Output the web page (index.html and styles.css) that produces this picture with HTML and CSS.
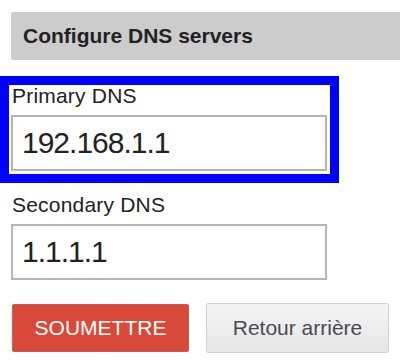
FILE: index.html
```html
<!DOCTYPE html>
<html lang="fr">
<head>
  <meta charset="UTF-8">
  <title>Configure DNS servers</title>
  <link rel="stylesheet" href="styles.css">
</head>
<body>
  <div class="page">
    <div class="section-title">Configure DNS servers</div>

    <div class="field highlight">
      <label for="dns1">Primary DNS</label>
      <input id="dns1" type="text" value="192.168.1.1">
    </div>

    <div class="field">
      <label for="dns2">Secondary DNS</label>
      <input id="dns2" type="text" value="1.1.1.1">
    </div>

    <div class="actions">
      <button class="btn btn-submit">SOUMETTRE</button>
      <button class="btn btn-back">Retour arrière</button>
    </div>
  </div>
</body>
</html>
```

FILE: styles.css
```css
body {
  margin: 0;
  font-family: "Liberation Sans", Arial, sans-serif;
  background: #fff;
  color: #222;
  overflow: hidden;
}
.page {
  padding: 12px 0 0 9px;
}
.section-title {
  margin-left: 2px;
  margin-right: -20px;
  height: 48px;
  line-height: 48px;
  padding-left: 12px;
  background: #cccccc;
  border-radius: 2px;
  font-size: 21px;
  font-weight: bold;
  color: #222;
}
.field {
  width: 321px;
  padding: 0 0 0 2px;
  box-sizing: border-box;
  margin-top: 20px;
}
.field label {
  display: block;
  margin-left: 1px;
  font-size: 21px;
  line-height: 22px;
  letter-spacing: 0.2px;
  color: #222;
}
.field input {
  display: block;
  width: 316px;
  height: 56px;
  box-sizing: border-box;
  margin-top: 8px;
  padding: 0 9px;
  border: 2px solid #b5b5b5;
  font-family: "Liberation Sans", Arial, sans-serif;
  font-size: 30px;
  letter-spacing: -1px;
  color: #222;
  outline: none;
}
.highlight {
  margin-top: 25px;
  padding-bottom: 3px;
  outline: 9px solid #0000ff;
}
.actions {
  display: flex;
  align-items: center;
  gap: 17px;
  margin-top: 23px;
  margin-left: 3px;
}
.btn {
  font-family: "Liberation Sans", Arial, sans-serif;
  font-size: 21px;
  border-radius: 2px;
  cursor: pointer;
}
.btn-submit {
  width: 177px;
  height: 48px;
  background: #d9493a;
  border: 1px solid #cc5a4f;
  color: #fff;
}
.btn-back {
  width: 183px;
  height: 50px;
  background: linear-gradient(#f4f4f4, #e6e6e6);
  border: 1px solid #d2d2d2;
  color: #4a4a52;
}
```
